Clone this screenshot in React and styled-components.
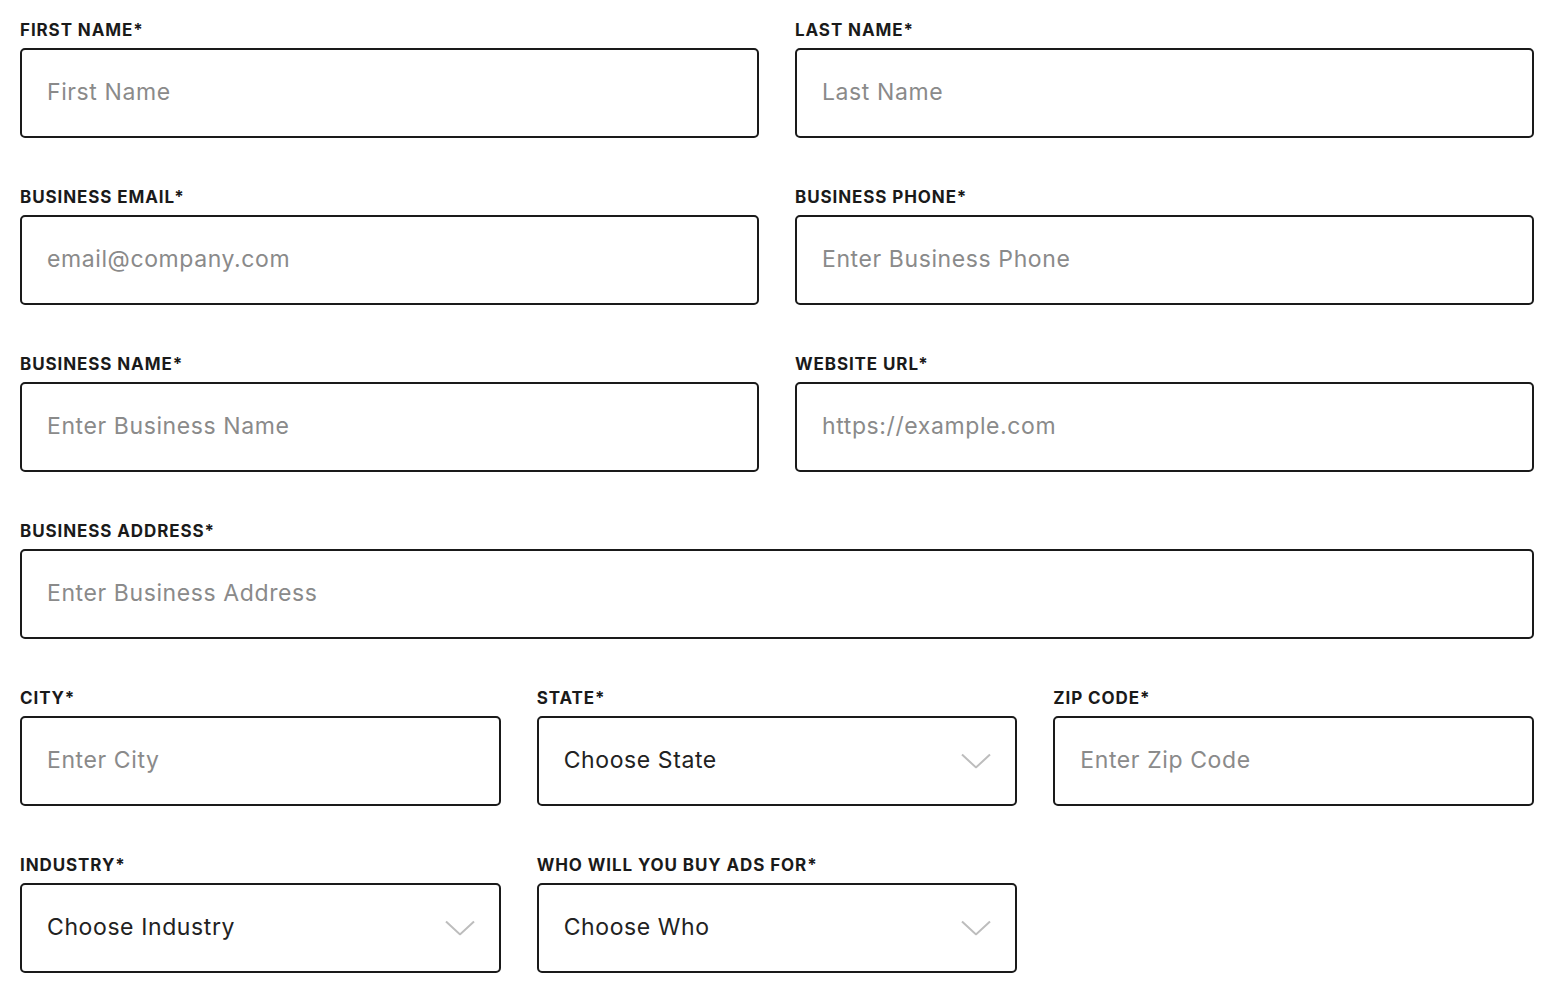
import React from "react";
import styled, { createGlobalStyle } from "styled-components";

const Global = createGlobalStyle`
  html, body { margin: 0; padding: 0; background: #fff; }
  body { font-family: Inter, "Liberation Sans", sans-serif; color: #111; }
  * { box-sizing: border-box; }
`;

const Form = styled.form`
  width: 1514px;
  margin-left: 20px;
  padding-top: 20px;
  display: flex;
  flex-direction: column;
  gap: 49px;
`;

const Row = styled.div`
  display: grid;
  grid-template-columns: ${(p) => `repeat(${p.$cols}, 1fr)`};
  column-gap: 36px;
`;

const Field = styled.div`
  display: flex;
  flex-direction: column;
  min-width: 0;
`;

const Label = styled.label`
  font-family: Inter, "Liberation Sans", sans-serif;
  font-weight: 700;
  font-size: 17px;
  line-height: 20px;
  letter-spacing: 0.9px;
  text-transform: uppercase;
  color: #1a1a1a;
  margin-bottom: 8px;
`;

const Input = styled.input`
  height: 90px;
  width: 100%;
  border: 2px solid #1a1a1a;
  border-radius: 5px;
  padding: 0 25px;
  padding-bottom: 3px;
  font-family: Inter, "Liberation Sans", sans-serif;
  font-size: 23px;
  letter-spacing: 0.6px;
  color: #222;
  background: #fff;
  outline: none;
  &::placeholder { color: #8a8a8a; opacity: 1; }
`;

const SelectWrap = styled.div`
  position: relative;
  height: 90px;
`;

const Select = styled.select`
  appearance: none;
  -webkit-appearance: none;
  height: 90px;
  width: 100%;
  border: 2px solid #1a1a1a;
  border-radius: 5px;
  padding: 0 70px 3px 25px;
  font-family: Inter, "Liberation Sans", sans-serif;
  font-size: 23px;
  letter-spacing: 0.6px;
  color: #222;
  background: #fff;
  outline: none;
`;

const Chevron = styled.svg`
  position: absolute;
  right: 26px;
  top: 50%;
  transform: translateY(-50%);
  width: 30px;
  height: 15px;
  pointer-events: none;
`;

function TextField({ label, placeholder }) {
  return (
    <Field>
      <Label>{label}</Label>
      <Input placeholder={placeholder} />
    </Field>
  );
}

function SelectField({ label, value }) {
  return (
    <Field>
      <Label>{label}</Label>
      <SelectWrap>
        <Select defaultValue="">
          <option value="">{value}</option>
        </Select>
        <Chevron viewBox="0 0 30 15" fill="none">
          <path d="M1 1 L15 14 L29 1" stroke="#bdbdbd" strokeWidth="2" />
        </Chevron>
      </SelectWrap>
    </Field>
  );
}

export default function App() {
  return (
    <>
      <Global />
      <Form>
        <Row $cols={2}>
          <TextField label="First Name*" placeholder="First Name" />
          <TextField label="Last Name*" placeholder="Last Name" />
        </Row>
        <Row $cols={2}>
          <TextField label="Business Email*" placeholder="email@company.com" />
          <TextField label="Business Phone*" placeholder="Enter Business Phone" />
        </Row>
        <Row $cols={2}>
          <TextField label="Business Name*" placeholder="Enter Business Name" />
          <TextField label="Website URL*" placeholder="https://example.com" />
        </Row>
        <Row $cols={1}>
          <TextField label="Business Address*" placeholder="Enter Business Address" />
        </Row>
        <Row $cols={3}>
          <TextField label="City*" placeholder="Enter City" />
          <SelectField label="State*" value="Choose State" />
          <TextField label="Zip Code*" placeholder="Enter Zip Code" />
        </Row>
        <Row $cols={3}>
          <SelectField label="Industry*" value="Choose Industry" />
          <SelectField label="Who will you buy ads for*" value="Choose Who" />
        </Row>
      </Form>
    </>
  );
}
